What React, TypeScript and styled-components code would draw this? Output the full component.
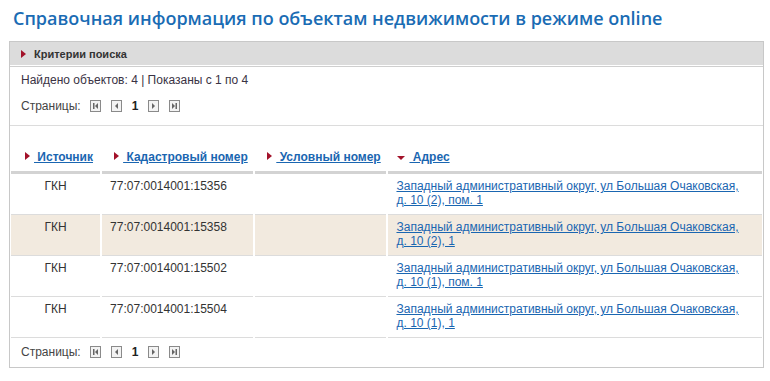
import React from 'react'
import styled, { createGlobalStyle } from 'styled-components'

const GlobalStyle = createGlobalStyle`
	html, body {
		margin: 0;
		padding: 0;
		background: #fff;
	}
	body {
		font-family: 'Liberation Sans', Arial, sans-serif;
		font-size: 12px;
		color: #333;
	}
	*, *::before, *::after {
		box-sizing: border-box;
	}
`

const Page = styled.div`
	padding: 5px 7px 0 9px;
`

const Title = styled.h1`
	margin: 0 0 10px 4px;
	font-family: 'Open Sans', sans-serif;
	font-weight: 600;
	font-size: 18px;
	line-height: 26px;
	color: #1a6cb4;
`

const Panel = styled.div`
	border: 1px solid #c8c8c8;
	width: 755px;
`

const PanelHead = styled.div`
	border-bottom: 1px solid #cfcfcf;
	padding-bottom: 1px;
`

const PanelBar = styled.div`
	display: flex;
	align-items: center;
	gap: 8px;
	height: 23px;
	padding-left: 11px;
	background: #dcdcdc;
	font-size: 11px;
	font-weight: bold;
	color: #333;
`

const Arrow = styled.span<{ $down?: boolean }>`
	display: inline-block;
	width: 0;
	height: 0;
	vertical-align: 1px;
	border-style: solid;
	${(p) =>
		p.$down
			? `border-width: 4px 4px 0 4px; border-color: #a3122a transparent transparent transparent;`
			: `border-width: 4px 0 4px 5px; border-color: transparent transparent transparent #a3122a;`}
`

const Summary = styled.div`
	padding: 6px 11px 12px;
	border-bottom: 1px solid #dcdcdc;
`

const InfoLine = styled.div`
	line-height: 14px;
	color: #3a3344;
`

const Pager = styled.div<{ $top?: number }>`
	display: flex;
	align-items: center;
	gap: 10px;
	margin-top: ${(p) => p.$top ?? 0}px;
	height: 14px;
	color: #444;
`

const PagerLabel = styled.span`
	margin-right: -1px;
`

const PageNum = styled.b`
	color: #222;
	font-size: 12px;
`

const Table = styled.table`
	width: calc(100% + 2px);
	margin: 0 -1px;
	border-collapse: separate;
	border-spacing: 2px 0;
	table-layout: fixed;
`

const Th = styled.th<{ $w: number; $pad?: number }>`
	width: ${(p) => p.$w}px;
	height: 48px;
	padding: 0 0 7px ${(p) => p.$pad ?? 12}px;
	vertical-align: bottom;
	text-align: left;
	border-bottom: 3px solid #d3d3d3;
	line-height: 14px;
	white-space: nowrap;
`

const SortLink = styled.a`
	margin-left: 4px;
	font-weight: bold;
	color: #1a66b1;
	text-decoration: underline;
	white-space: pre;
`

const Tr = styled.tr<{ $hl?: boolean }>`
	td {
		background: ${(p) => (p.$hl ? '#f2eadf' : '#fff')};
	}
`

const Td = styled.td<{ $center?: boolean; $padRight?: number }>`
	padding: 5px ${(p) => p.$padRight ?? 8}px 7px 8px;
	vertical-align: top;
	line-height: 14px;
	font-weight: normal;
	border-bottom: 1px solid #dcdcdc;
	text-align: ${(p) => (p.$center ? 'center' : 'left')};
	color: #333;
`

const AddrLink = styled.a`
	color: #1a66b1;
	text-decoration: underline;
`

const Footer = styled.div`
	padding: 7px 11px 8px;
`

const PagerBtn = ({ kind }: { kind: 'first' | 'prev' | 'next' | 'last' }) => (
	<svg width="11" height="12" viewBox="0 0 11 12">
		<rect x="0.5" y="0.5" width="10" height="11" fill="#f3f3f3" stroke="#8a8a8a" />
		{kind === 'first' && (
			<>
				<rect x="3" y="3" width="1.5" height="6" fill="#666" />
				<path d="M8 3 L5 6 L8 9 Z" fill="#666" />
			</>
		)}
		{kind === 'prev' && <path d="M7 3 L4 6 L7 9 Z" fill="#666" />}
		{kind === 'next' && <path d="M4 3 L7 6 L4 9 Z" fill="#666" />}
		{kind === 'last' && (
			<>
				<path d="M3 3 L6 6 L3 9 Z" fill="#666" />
				<rect x="6.5" y="3" width="1.5" height="6" fill="#666" />
			</>
		)}
	</svg>
)

const PagerRow = ({ top }: { top?: number }) => (
	<Pager $top={top}>
		<PagerLabel>Страницы:</PagerLabel>
		<PagerBtn kind="first" />
		<PagerBtn kind="prev" />
		<PageNum>1</PageNum>
		<PagerBtn kind="next" />
		<PagerBtn kind="last" />
	</Pager>
)

const rows = [
	{ num: '77:07:0014001:15356', addr: 'Западный административный округ, ул Большая Очаковская, д. 10 (2), пом. 1' },
	{ num: '77:07:0014001:15358', addr: 'Западный административный округ, ул Большая Очаковская, д. 10 (2), 1' },
	{ num: '77:07:0014001:15502', addr: 'Западный административный округ, ул Большая Очаковская, д. 10 (1), пом. 1' },
	{ num: '77:07:0014001:15504', addr: 'Западный административный округ, ул Большая Очаковская, д. 10 (1), 1' }
]

export default function App() {
	return (
		<Page>
			<GlobalStyle />
			<Title>Справочная информация по объектам недвижимости в режиме online</Title>
			<Panel>
				<PanelHead>
					<PanelBar>
						<Arrow />
						Критерии поиска
					</PanelBar>
				</PanelHead>
				<Summary>
					<InfoLine>Найдено объектов: 4 | Показаны с 1 по 4</InfoLine>
					<PagerRow top={12} />
				</Summary>
				<Table>
					<thead>
						<tr>
							<Th $w={89} $pad={14}>
								<Arrow />
								<SortLink href="#"> Источник</SortLink>
							</Th>
							<Th $w={151}>
								<Arrow />
								<SortLink href="#"> Кадастровый номер</SortLink>
							</Th>
							<Th $w={131}>
								<Arrow />
								<SortLink href="#"> Условный номер</SortLink>
							</Th>
							<Th $w={373} $pad={9}>
								<Arrow $down />
								<SortLink href="#"> Адрес</SortLink>
							</Th>
						</tr>
					</thead>
					<tbody>
						{rows.map((r, i) => (
							<Tr key={r.num} $hl={i === 1}>
								<Td $center>ГКН</Td>
								<Td>{r.num}</Td>
								<Td />
								<Td $padRight={16}>
									<AddrLink href="#">{r.addr}</AddrLink>
								</Td>
							</Tr>
						))}
					</tbody>
				</Table>
				<Footer>
					<PagerRow />
				</Footer>
			</Panel>
		</Page>
	)
}
